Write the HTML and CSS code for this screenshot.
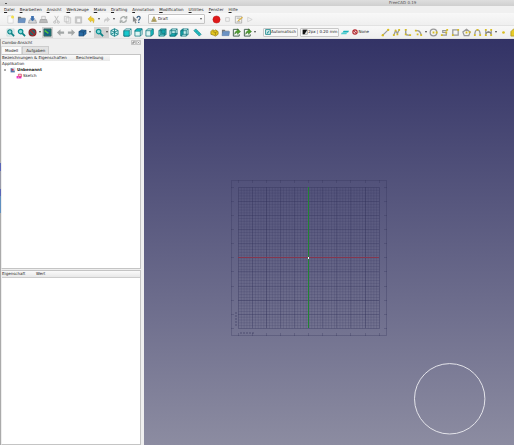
FILE: index.html
```html
<!DOCTYPE html>
<html lang="de">
<head>
<meta charset="utf-8">
<title>FreeCAD 0.19</title>
<link rel="stylesheet" href="styles.css">
</head>
<body>
<svg class="defs" aria-hidden="true">
  <defs>
    <symbol id="new" viewBox="0 0 10 10"><path d="M2 1h6v8H2z" fill="#fafafa" stroke="#bbb" stroke-width=".5"/><circle cx="7.3" cy="2.2" r="1.7" fill="#f3df4a"/></symbol>
    <symbol id="open" viewBox="0 0 10 10"><path d="M1 8.5V2h3l1 1h4v1H2.500z" fill="#777"/><path d="M1.200 8.500 2 4h7.500L8.800 8.500z" fill="#6c93c4" stroke="#4d74a4" stroke-width=".5"/></symbol>
    <symbol id="save" viewBox="0 0 10 10"><path d="M1.500 5.500h7l1 3.500h-9z" fill="#d4d7da" stroke="#888" stroke-width=".6"/><path d="M3.500 1h3v3H8L5 7 2 4h1.500z" fill="#3c6fae"/></symbol>
    <symbol id="print" viewBox="0 0 10 10"><path d="M3 1.500h4V5H3z" fill="#eee" stroke="#aaa" stroke-width=".6"/><path d="M1.500 5h7l1 3.500h-9z" fill="#bbb" stroke="#888" stroke-width=".5"/></symbol>
    <symbol id="cut" viewBox="0 0 10 10" fill="none" stroke="#bbb"><path d="m3 1 3.500 6M7 1 3.500 7"/><circle cx="3" cy="8" r="1.200"/><circle cx="7" cy="8" r="1.200"/></symbol>
    <symbol id="copy" viewBox="0 0 10 10" fill="#f2f2f2" stroke="#bbb" stroke-width=".7"><path d="M1.500 1.500h5v6h-5zM3.500 3h5v6h-5z"/></symbol>
    <symbol id="paste" viewBox="0 0 10 10" stroke="#bbb" stroke-width=".8"><path d="M1.500 2h7v7h-7z" fill="#ccc"/><path d="M3 3.500h4.500v5H3z" fill="#f5f5f5"/></symbol>
    <symbol id="undo" viewBox="0 0 10 10"><path d="M4.500 1v2C8 3 9 5 7 9c0-2-.5-3-2.500-3v2L1 4.500z" fill="#edcb30" stroke="#c6a51f" stroke-width=".4"/></symbol>
    <symbol id="redo" viewBox="0 0 10 10"><path d="M5.500 2v2C2.500 4 1.500 6 3 9c0-2 .5-3 2.500-3v2L9 5z" fill="#ccc"/></symbol>
    <symbol id="refresh" viewBox="0 0 10 10" fill="none" stroke="#a9aeac" stroke-width="1.500"><path d="M1.800 5A3.200 3.200 0 0 1 7.500 3M8.200 5A3.200 3.200 0 0 1 2.500 7M8.500 1v2.500H6M1.500 9V6.500H4"/></symbol>
    <symbol id="help" viewBox="0 0 10 10"><path d="m1 1 5 5H4l1 3-1.500.5-1-3L1 8z" fill="#888"/><path d="M5.500 3.500C6 .5 9.500 1 9 3.500 8.500 5 7.500 4.500 7.500 6.500M7.500 7.500V9" fill="none" stroke="#3c6388" stroke-width="1.400"/></symbol>
    <symbol id="draft" viewBox="0 0 10 10"><path d="M1 9 5 1l4 8z" fill="#d9c463" stroke="#8c8050"/><path d="M3 7h4" stroke="#555"/></symbol>
    <symbol id="record" viewBox="0 0 10 10"><circle cx="5" cy="5" r="4" fill="#df1919" stroke="#b80f0f" stroke-width=".5"/></symbol>
    <symbol id="stop" viewBox="0 0 10 10"><path d="M3 3h4v4H3z" fill="#f4f4f4" stroke="#ccc"/></symbol>
    <symbol id="macro" viewBox="0 0 10 10"><path d="M1.500 1.500h7v7.500h-7z" fill="#f5f5f0" stroke="#999" stroke-width=".7"/><path d="M3 3.500h4M3 7.500h4" stroke="#888" stroke-width=".7"/><path d="m4 6 5-4 1 1-5 4z" fill="#dcb345"/></symbol>
    <symbol id="play" viewBox="0 0 10 10"><path d="m3 2.500 5 2.500-5 2.500z" fill="#f4f4f4" stroke="#ccc" stroke-width=".8"/></symbol>
    <symbol id="fitall" viewBox="0 0 10 10"><path d="M1 1h8v8H1z" fill="#e0efef" stroke="#b5cccc" stroke-width=".5"/><circle cx="4.300" cy="4.300" r="2.300" fill="#8bdada" stroke="#087f83" stroke-width="1.200"/><path d="m6 6 3 3" stroke="#087f83" stroke-width="1.700"/></symbol>
    <symbol id="fit" viewBox="0 0 10 10"><circle cx="4" cy="4" r="2.500" fill="#8bdada" stroke="#088e92" stroke-width="1.300"/><path d="m6 6 3 3" stroke="#087f83" stroke-width="1.900"/></symbol>
    <symbol id="style" viewBox="0 0 10 10"><circle cx="5" cy="5" r="3.700" fill="#27636a" stroke="#8b262a" stroke-width="1.500"/><path d="m2.500 2.500 5 5" stroke="#b22528" stroke-width="1.300"/></symbol>
    <symbol id="bbox" viewBox="0 0 10 10"><path d="M1 1h8v8H1z" fill="#187e78" stroke="#355" stroke-width=".8"/><path d="m2 3 3-1 3 2v3L5 8.500 2 7z" fill="#195c8a"/><path d="m2 3 4 3" stroke="#57c43e" stroke-width="1.700"/></symbol>
    <symbol id="back" viewBox="0 0 10 10"><path d="M1 5 5 1.500V4h4v2.500H5V9z" fill="#a3a7a7"/></symbol>
    <symbol id="forward" viewBox="0 0 10 10"><path d="M9 5 5 1.500V4H1v2.500h4V9z" fill="#a3a7a7"/></symbol>
    <symbol id="link" viewBox="0 0 10 10"><path d="m1 4 3-2 5 .5v4L6 9H1z" fill="#2869a3" stroke="#204b70" stroke-width=".6"/><path d="m1 4 5 .5 3-2M6 4.500V9" fill="none" stroke="#143f66" stroke-width=".7"/></symbol>
    <symbol id="iso" viewBox="0 0 10 10" fill="#c9f1f1" stroke="#087980" stroke-width=".9"><path d="m5 .8 4 2v4.400l-4 2-4-2V2.800zM1 2.800l4 1.700 4-1.700M5 .8v8.400M1 7l4-2 4 2"/></symbol>
    <symbol id="front" viewBox="0 0 10 10" stroke="#08717a" stroke-width=".8"><path d="m1 3 2-2h6v6L7 9H1z" fill="#e1f7f5"/><path d="M1 3h6v6H1z" fill="#18c7cc"/><path d="m7 3 2-2"/></symbol>
    <symbol id="top" viewBox="0 0 10 10" stroke="#08717a" stroke-width=".8"><path d="m1 3 2-2h6v6L7 9H1z" fill="#ddf5f3"/><path d="m1 3.500 2-2.500h6L7 3.500z" fill="#18c7cc"/><path d="M7 3.500V9"/></symbol>
    <symbol id="right" viewBox="0 0 10 10" stroke="#08717a" stroke-width=".8"><path d="m1 3 2-2h6v6L7 9H1z" fill="#ddf5f3"/><path d="M1 3h5.500"/><path d="m6.500 3 2.500-2v6L6.500 9z" fill="#18c7cc"/></symbol>
    <symbol id="rear" viewBox="0 0 10 10" stroke="#087079" stroke-width=".8"><path d="m1 3 2-2h6v6L7 9H1z" fill="#79d9d9"/><path d="M3 1v6h6M3 7 1 9M1 3h6v6M7 3l2-2" fill="none"/><path d="M4 2h4v4H4z" fill="#15a8ad"/></symbol>
    <symbol id="bottom" viewBox="0 0 10 10" stroke="#087079" stroke-width=".8"><path d="m1 3 2-2h6v6L7 9H1z" fill="#c9f0ef"/><path d="m1 9 2-3h6L7 9z" fill="#15a8ad"/><path d="M3 1v5M1 3h6v6M7 3l2-2" fill="none"/></symbol>
    <symbol id="left" viewBox="0 0 10 10" stroke="#087079" stroke-width=".8"><path d="m1 3 2-2h6v6L7 9H1z" fill="#c9f0ef"/><path d="m1 3 2.500-2v6L1 9z" fill="#15a8ad"/><path d="M3 7h6M1 3h6v6M7 3l2-2" fill="none"/></symbol>
    <symbol id="measure" viewBox="0 0 10 10"><path d="m1 3 2-2 6 6-2 2z" fill="#20bfc4" stroke="#07757c" stroke-width=".7"/><path d="m4 4 1-1M6 6l1-1" stroke="#07757c" stroke-width=".6"/></symbol>
    <symbol id="part" viewBox="0 0 10 10"><path d="m1 4 2-2 2 1 1-1 3 2v3L6 9 4 8 1 7z" fill="#e4c620" stroke="#927c12" stroke-width=".8"/><path d="m3 4 3 1v3M6 5l2-1" fill="none" stroke="#927c12" stroke-width=".8"/></symbol>
    <symbol id="export" viewBox="0 0 10 10"><path d="M7 3V1.500H1.500v7.500H8V7" fill="#f4f6f4" stroke="#486454" stroke-width="1.100"/><path d="M3 7C3 4 5 3 6 3V1l3.500 3L6 7V5C5 5 4 5.500 3 7z" fill="#4ea12c" stroke="#2b6619" stroke-width=".5"/></symbol>
    <symbol id="plane" viewBox="0 0 10 10"><path d="M1 1h8v8H1z" fill="#d6eeee" stroke="#087a80" stroke-width="1.300"/><path d="m3 8 1-3 4-3-3 5z" fill="#168d94"/></symbol>
    <symbol id="swatch" viewBox="0 0 10 10"><path d="M1 1h8v8H1z" fill="#111"/><path d="M9 1v8H4z" fill="#ddd"/></symbol>
    <symbol id="construct" viewBox="0 0 10 10"><path d="m3 5 1-2h6L9 5z" fill="#16b2bb"/><path d="m1 7 1-2h6L7 7z" fill="#50ced0"/></symbol>
    <symbol id="none" viewBox="0 0 10 10"><circle cx="5" cy="5" r="3.600" fill="#eee" stroke="#b3242b" stroke-width="1.900"/><path d="m2.500 2.500 5 5" stroke="#b3242b" stroke-width="1.700"/></symbol>
    <symbol id="line" viewBox="0 0 10 10"><path d="m2 8 6-6" stroke="#999" stroke-width="1.300"/><circle cx="2" cy="8" r="1.300" class="node"/><circle cx="8" cy="2" r="1.300" class="node"/></symbol>
    <symbol id="wire" viewBox="0 0 10 10"><path d="m2 8 2-5 2 3 2-4" fill="none" stroke="#999" stroke-width="1.400"/><path d="M1 7h2v2H1zM3 2h2v2H3zM5 6h2v2H5zM7 1h2v2H7z" class="node"/></symbol>
    <symbol id="fillet" viewBox="0 0 10 10"><path d="M3 1v5q0 2 5 2" fill="none" stroke="#999" stroke-width="1.600"/><path d="M2 1h2v2H2zM2 6h2v2H2zM7 7h2v2H7z" class="node"/></symbol>
    <symbol id="arc" viewBox="0 0 10 10"><path d="M2 3q5-1 6 5" fill="none" stroke="#999" stroke-width="1.500"/><path d="M1 2h2v2H1zM3 6h2v2H3zM7 7h2v2H7z" class="node"/></symbol>
    <symbol id="circle" viewBox="0 0 10 10"><circle cx="5" cy="5" r="3.700" fill="none" stroke="#999" stroke-width="1.400"/><path d="M4 4h2v2H4zM7.500 4h2v2h-2z" class="node"/></symbol>
    <symbol id="ellipse" viewBox="0 0 10 10"><path d="M2 8h5V5H3V3h5" fill="none" stroke="#999" stroke-width="1.300"/><path d="M1 7h2v2H1zM7 1h2v2H7zM6 4h2v2H6z" class="node"/></symbol>
    <symbol id="rect" viewBox="0 0 10 10"><path d="M2 2h6v6H2z" fill="none" stroke="#999" stroke-width="1.400"/><path d="M1 7h2v2H1zM7 1h2v2H7z" class="node"/></symbol>
    <symbol id="polygon" viewBox="0 0 10 10"><path d="m5 1.500 4 3L7.500 8.500h-5L1 4.500z" fill="none" stroke="#999" stroke-width="1.400"/><path d="M4 4h2v2H4zM7.500 3.500h2v2h-2z" class="node"/></symbol>
    <symbol id="spline" viewBox="0 0 10 10"><path d="M2 8q0-6 3-6t3 6" fill="none" stroke="#999" stroke-width="1.400"/><path d="M1 7h2v2H1zM4 1h2v2H4zM7 7h2v2H7z" class="node"/></symbol>
    <symbol id="bezier" viewBox="0 0 10 10"><path d="M2 9V2M8 9V2M2 7q3-6 6 0M2 5h6" fill="none" stroke="#888" stroke-width="1.200"/><path d="M1 1h2v2H1zM7 1h2v2H7zM1 7h2v2H1zM7 7h2v2H7z" class="node"/></symbol>
    <symbol id="point" viewBox="0 0 10 10"><circle cx="5" cy="5" r="1.500" class="node"/></symbol>
    <symbol id="facebinder" viewBox="0 0 10 10"><path d="m1 4 3-3h5v8H1z" fill="#e7cb28" stroke="#a88f16" stroke-width=".8"/></symbol>
    <symbol id="doc" viewBox="0 0 10 10"><path d="M1 2h7v7H1z" fill="#5478ad"/><path d="M4 1h5v5H4z" fill="#d9e1ec"/><path d="M3 3h3v3H3z" fill="#c83246"/></symbol>
    <symbol id="sketch" viewBox="0 0 10 10"><path d="M1 5h8v4H1z" fill="#e829c5"/><path d="M4 2h5v4H4z" fill="#f7c3db" stroke="#d62642"/><path d="M3 7h2" stroke="#fff"/></symbol>
    <symbol id="close" viewBox="0 0 10 10"><path d="M1 1h8v8H1z" fill="#eee" stroke="#999"/><path d="m3 3 4 4M7 3 3 7" stroke="#777"/></symbol>
    <symbol id="float" viewBox="0 0 10 10"><path d="M1 1h8v8H1z" fill="#eee" stroke="#999"/><path d="M3 5h4V3H5v4H3z" fill="none" stroke="#777"/></symbol>
  </defs>
</svg>

<header class="titlebar"><span class="minimize"></span><h1>FreeCAD 0.19</h1></header>

<nav class="menubar">
  <button><u>D</u>atei</button><button><u>B</u>earbeiten</button><button><u>A</u>nsicht</button><button><u>W</u>erkzeuge</button><button><u>M</u>akro</button><button><u>D</u>rafting</button><button><u>A</u>nnotation</button><button><u>M</u>odification</button><button><u>U</u>tilities</button><button><u>F</u>enster</button><button><u>H</u>ilfe</button>
</nav>

<div class="toolbar">
  <div class="group">
    <button class="tool" aria-label="Neu"><svg><use href="#new"/></svg></button>
    <button class="tool" aria-label="Öffnen"><svg><use href="#open"/></svg></button>
    <button class="tool" aria-label="Speichern"><svg><use href="#save"/></svg></button>
    <button class="tool" aria-label="Drucken"><svg><use href="#print"/></svg></button>
  </div>
  <div class="group">
    <button class="tool" aria-label="Ausschneiden"><svg><use href="#cut"/></svg></button>
    <button class="tool" aria-label="Kopieren"><svg><use href="#copy"/></svg></button>
    <button class="tool" aria-label="Einfügen"><svg><use href="#paste"/></svg></button>
  </div>
  <div class="group">
    <button class="tool" aria-label="Rückgängig"><svg><use href="#undo"/></svg></button>
    <button class="chevron" aria-label="Rückgängig-Liste"></button>
    <button class="tool" aria-label="Wiederherstellen"><svg><use href="#redo"/></svg></button>
    <button class="chevron" aria-label="Wiederherstellen-Liste"></button>
  </div>
  <div class="group"><button class="tool" aria-label="Aktualisieren"><svg><use href="#refresh"/></svg></button></div>
  <div class="group wide"><button class="tool" aria-label="Direkthilfe"><svg><use href="#help"/></svg></button></div>
  <div class="group wide">
    <label class="workbench"><svg><use href="#draft"/></svg><select aria-label="Arbeitsbereich"><option>Draft</option></select></label>
  </div>
  <div class="group">
    <button class="tool" aria-label="Makro aufzeichnen"><svg><use href="#record"/></svg></button>
    <button class="tool" aria-label="Makro stoppen"><svg><use href="#stop"/></svg></button>
    <button class="tool" aria-label="Makros"><svg><use href="#macro"/></svg></button>
    <button class="tool" aria-label="Makro ausführen"><svg><use href="#play"/></svg></button>
  </div>
</div>

<div class="toolbar">
  <div class="group">
    <button class="tool" aria-label="Alles einpassen"><svg><use href="#fitall"/></svg></button>
    <button class="tool" aria-label="Auswahl einpassen"><svg><use href="#fit"/></svg></button>
    <button class="tool" aria-label="Darstellungsart"><svg><use href="#style"/></svg></button>
    <button class="chevron" aria-label="Darstellungsarten"></button>
    <button class="tool pressed" aria-label="Hüllquader"><svg><use href="#bbox"/></svg></button>
  </div>
  <div class="group">
    <button class="tool" aria-label="Zurück"><svg><use href="#back"/></svg></button>
    <button class="tool" aria-label="Vorwärts"><svg><use href="#forward"/></svg></button>
    <button class="tool" aria-label="Verknüpfung"><svg><use href="#link"/></svg></button>
    <button class="chevron" aria-label="Verknüpfungen"></button>
  </div>
  <div class="group">
    <button class="tool pressed" aria-label="Zoom"><svg><use href="#fit"/></svg></button>
    <button class="chevron pressed" aria-label="Zoomstufen"></button>
    <button class="tool" aria-label="Isometrisch"><svg><use href="#iso"/></svg></button>
  </div>
  <div class="group">
    <button class="tool" aria-label="Vorne"><svg><use href="#front"/></svg></button>
    <button class="tool" aria-label="Oben"><svg><use href="#top"/></svg></button>
    <button class="tool" aria-label="Rechts"><svg><use href="#right"/></svg></button>
  </div>
  <div class="group">
    <button class="tool" aria-label="Hinten"><svg><use href="#rear"/></svg></button>
    <button class="tool" aria-label="Unten"><svg><use href="#bottom"/></svg></button>
    <button class="tool" aria-label="Links"><svg><use href="#left"/></svg></button>
  </div>
  <div class="group wide"><button class="tool" aria-label="Messen"><svg><use href="#measure"/></svg></button></div>
  <div class="group wide">
    <button class="tool" aria-label="Teil"><svg><use href="#part"/></svg></button>
    <button class="tool" aria-label="Gruppe"><svg><use href="#open"/></svg></button>
    <button class="tool" aria-label="Link erstellen"><svg><use href="#export"/></svg></button>
    <button class="tool" aria-label="Link importieren"><svg><use href="#export"/></svg></button>
    <button class="chevron" aria-label="Linkaktionen"></button>
  </div>
  <div class="group">
    <button class="field"><svg><use href="#plane"/></svg>Automatisch</button>
  </div>
  <div class="group">
    <button class="field"><svg><use href="#swatch"/></svg>2px | 0.20 mm</button>
    <button class="tool" aria-label="Konstruktionsmodus"><svg><use href="#construct"/></svg></button>
  </div>
  <div class="group farther">
    <button class="flat"><svg><use href="#none"/></svg>None</button>
  </div>
  <div class="group">
    <button class="tool" aria-label="Linie"><svg><use href="#line"/></svg></button>
    <button class="tool" aria-label="Linienzug"><svg><use href="#wire"/></svg></button>
    <button class="tool" aria-label="Verrundung"><svg><use href="#fillet"/></svg></button>
    <button class="tool" aria-label="Bogen"><svg><use href="#arc"/></svg></button>
    <button class="chevron" aria-label="Bogenwerkzeuge"></button>
    <button class="tool" aria-label="Kreis"><svg><use href="#circle"/></svg></button>
    <button class="tool" aria-label="Ellipse"><svg><use href="#ellipse"/></svg></button>
    <button class="tool" aria-label="Rechteck"><svg><use href="#rect"/></svg></button>
    <button class="tool" aria-label="Polygon"><svg><use href="#polygon"/></svg></button>
    <button class="tool" aria-label="B-Spline"><svg><use href="#spline"/></svg></button>
    <button class="tool" aria-label="Bézier"><svg><use href="#bezier"/></svg></button>
    <button class="chevron" aria-label="Bézierwerkzeuge"></button>
    <button class="tool" aria-label="Punkt"><svg><use href="#point"/></svg></button>
    <button class="tool" aria-label="Facebinder"><svg><use href="#facebinder"/></svg></button>
  </div>
</div>

<main class="workspace">
  <aside class="combo">
    <div class="combo-title"><h2>Combo-Ansicht</h2>
      <button aria-label="Abdocken"><svg><use href="#float"/></svg></button>
      <button aria-label="Schließen"><svg><use href="#close"/></svg></button>
    </div>
    <div class="tabs" role="tablist">
      <button class="tab active" role="tab" aria-selected="true">Modell</button>
      <button class="tab" role="tab" aria-selected="false">Aufgaben</button>
    </div>
    <section class="tree">
      <div class="columns"><span>Bezeichnungen &amp; Eigenschaften</span><span>Beschreibung</span></div>
      <ul class="items">
        <li>Applikation</li>
        <li class="document"><i class="expander"></i><svg><use href="#doc"/></svg><b>Unbenannt</b></li>
        <li class="object"><svg><use href="#sketch"/></svg>Sketch</li>
      </ul>
    </section>
    <section class="properties">
      <table>
        <thead><tr><th>Eigenschaft</th><th>Wert</th></tr></thead>
      </table>
    </section>
  </aside>

  <section class="view" aria-label="3D-Ansicht">
    <svg class="scene" viewBox="0 0 370 406" preserveAspectRatio="xMinYMin meet">
      <defs>
        <pattern id="minor" width="2.820" height="2.820" patternUnits="userSpaceOnUse" x="94" y="148"><path d="M0 .5h2.820M.5 0v2.820" stroke="#26264d" stroke-opacity=".2" stroke-width=".8"/></pattern>
      </defs>
      <path d="M94.500 148.500h141v141h-141z" fill="url(#minor)"/>
      <g fill="none" stroke="#2d2d55" stroke-opacity=".28">
        <path d="M87.500 141.500h155v155h-155z"/>
        <path d="M94.500 148.500h141v141h-141z"/>
        <path d="M108.500 148v141M136.500 148v141M150.500 148v141M178.500 148v141M192.500 148v141M206.500 148v141M94 162.500h141M94 176.500h141M94 190.500h141M94 204.500h141M94 232.500h141M94 247.500h141M94 275.500h141" stroke-opacity=".22"/>
        <path d="M122.500 148v141M221.500 148v141M94 261.500h141" stroke-opacity=".35"/>
        <path d="M94.500 141v3M108.500 141v3M122.500 141v3M136.500 141v3M150.500 141v3M164.500 141v3M178.500 141v3M192.500 141v3M206.500 141v3M221.500 141v3M235.500 141v3M94.500 294v3M108.500 294v3M122.500 294v3M136.500 294v3M150.500 294v3M164.500 294v3M178.500 294v3M192.500 294v3M206.500 294v3M221.500 294v3M235.500 294v3"/>
        <path d="M87 148.500h3M87 162.500h3M87 176.500h3M87 190.500h3M87 204.500h3M87 218.500h3M87 232.500h3M87 247.500h3M87 261.500h3M87 275.500h3M87 289.500h3M240 148.500h3M240 162.500h3M240 176.500h3M240 190.500h3M240 204.500h3M240 218.500h3M240 232.500h3M240 247.500h3M240 261.500h3M240 275.500h3M240 289.500h3"/>
        <path d="M96 294h14M92 287v-14" stroke-width="2" stroke-dasharray="2 1"/>
      </g>
      <path d="M94 218.500h141" stroke="#84364e"/>
      <path d="M164.500 148v141" stroke="#218332"/>
      <path d="M164 218h1v2h-1z" fill="#fff"/>
      <circle cx="305.700" cy="359.800" r="35.200" fill="none" stroke="#e4e4ea" stroke-width="1"/>
    </svg>
  </section>
</main>
</body>
</html>
```
FILE: styles.css
```css
* {
  box-sizing: border-box;
}

body {
  display: flex;
  flex-direction: column;
  min-height: 100vh;
  margin: 0;
  overflow: hidden;
  background: #efefef;
  color: #222;
  font: 4px/6px "DejaVu Sans", sans-serif;
}

.defs {
  position: absolute;
  width: 0;
  height: 0;
}

.node {
  fill: #d8bd21;
}

h1,
h2,
ul {
  margin: 0;
  padding: 0;
  font: inherit;
  list-style: none;
}

button,
select {
  margin: 0;
  padding: 0;
  border: 0;
  background: none;
  color: inherit;
  font: inherit;
}

svg {
  flex: none;
  width: 9px;
  height: 9px;
}

.titlebar {
  display: flex;
  align-items: center;
  justify-content: space-between;
  height: 6px;
  padding: 0 19% 0 5px;
  background: linear-gradient(#dedede, #cfcfcf);
  color: #555;
}

.minimize {
  width: 2px;
  height: 1px;
  background: #555;
}

.menubar {
  display: flex;
  gap: 5px;
  height: 7px;
  padding-left: 4px;
  background: #f0f0f0;
}

.toolbar {
  display: flex;
  align-items: center;
  height: 13px;
  padding-left: 5px;
  border-bottom: 1px solid #e2e2e2;
  background: linear-gradient(#f8f8f8, #efefef);
  overflow: hidden;
}

.group {
  display: flex;
  flex: none;
  align-items: center;
  margin-right: 2px;
}

.group.wide {
  margin-right: 6px;
}

.group.farther {
  margin-right: 11px;
}

.tool {
  display: flex;
  align-items: center;
  justify-content: center;
  width: 11px;
  height: 11px;
}

.pressed {
  background: #d2d2d2;
}

.chevron {
  display: flex;
  align-items: center;
  justify-content: center;
  width: 4px;
  height: 11px;
}

.chevron::before {
  content: "";
  border: 1px solid transparent;
  border-top: 2px solid #444;
  border-bottom: 0;
}

.workbench {
  display: flex;
  align-items: center;
  gap: 1px;
  width: 57px;
  height: 10px;
  padding: 0 2px;
  border: 1px solid #c4c4c4;
  border-radius: 1px;
  background: linear-gradient(#fff, #f1f1f1);
}

.workbench::after {
  content: "";
  border: 1px solid transparent;
  border-top: 2px solid #555;
  border-bottom: 0;
}

.workbench svg,
.field svg,
.flat svg {
  width: 6px;
  height: 6px;
}

.workbench select {
  flex: 1;
  appearance: none;
}

.field,
.flat {
  display: flex;
  align-items: center;
  justify-content: center;
  height: 9px;
  white-space: nowrap;
}

.field {
  min-width: 35px;
  padding: 0 1px;
  border: 1px solid #c8c8c8;
  border-radius: 1px;
  background: #f8f8f8;
}

.workspace {
  display: flex;
  flex: 1;
}

.combo {
  display: flex;
  flex: none;
  flex-direction: column;
  width: 28%;
  padding: 0 3px 0 1px;
  background:
    linear-gradient(#aaa 124px, #5a66b8 124px 132px, #9a9ca8 132px 150px, #5a66b8 150px 157px, #6090c0 157px 174px, #aaa 174px)
    left / 1px 100% no-repeat;
}

.combo-title {
  display: flex;
  align-items: center;
  height: 7px;
  padding-left: 1px;
}

.combo-title h2 {
  flex: 1;
}

.combo-title button {
  display: flex;
}

.combo-title svg {
  width: 5px;
  height: 5px;
}

.tabs {
  display: flex;
  height: 8px;
}

.tab {
  padding: 0 3px;
  border: 1px solid #ccc;
  border-bottom: 0;
  background: #e2e2e2;
}

.tab.active {
  border-color: #ddd;
  background: #fafafa;
}

.tree,
.properties {
  border: 1px solid #c4c4c4;
  border-left-color: #eee;
  background: #fff;
}

.tree {
  height: 215px;
  margin-bottom: 1px;
}

.properties {
  flex: 1;
}

.columns {
  display: grid;
  grid-template-columns: 74px 1fr;
  margin-right: 22%;
  background: linear-gradient(#fafafa, #e8e8e8);
}

.items svg {
  width: 6px;
  height: 6px;
}

.items li {
  display: flex;
  align-items: center;
}

.items .document {
  gap: 1px;
  padding-left: 2px;
}

.expander {
  width: 2px;
  height: 2px;
  margin-right: 3px;
  background: #aaa;
}

.items .object {
  gap: 1px;
  padding-left: 14px;
}

table {
  width: 100%;
  border-collapse: collapse;
}

th {
  padding: 0;
  border-bottom: 1px solid #ccc;
  background: linear-gradient(#fafafa, #e8e8e8);
  font-weight: normal;
  text-align: left;
}

th:first-child {
  width: 34px;
}

.view {
  flex: 1;
  min-width: 0;
  background: linear-gradient(#333366, #8c8ca1);
}

.scene {
  display: block;
  width: 370px;
  height: 406px;
}
```
